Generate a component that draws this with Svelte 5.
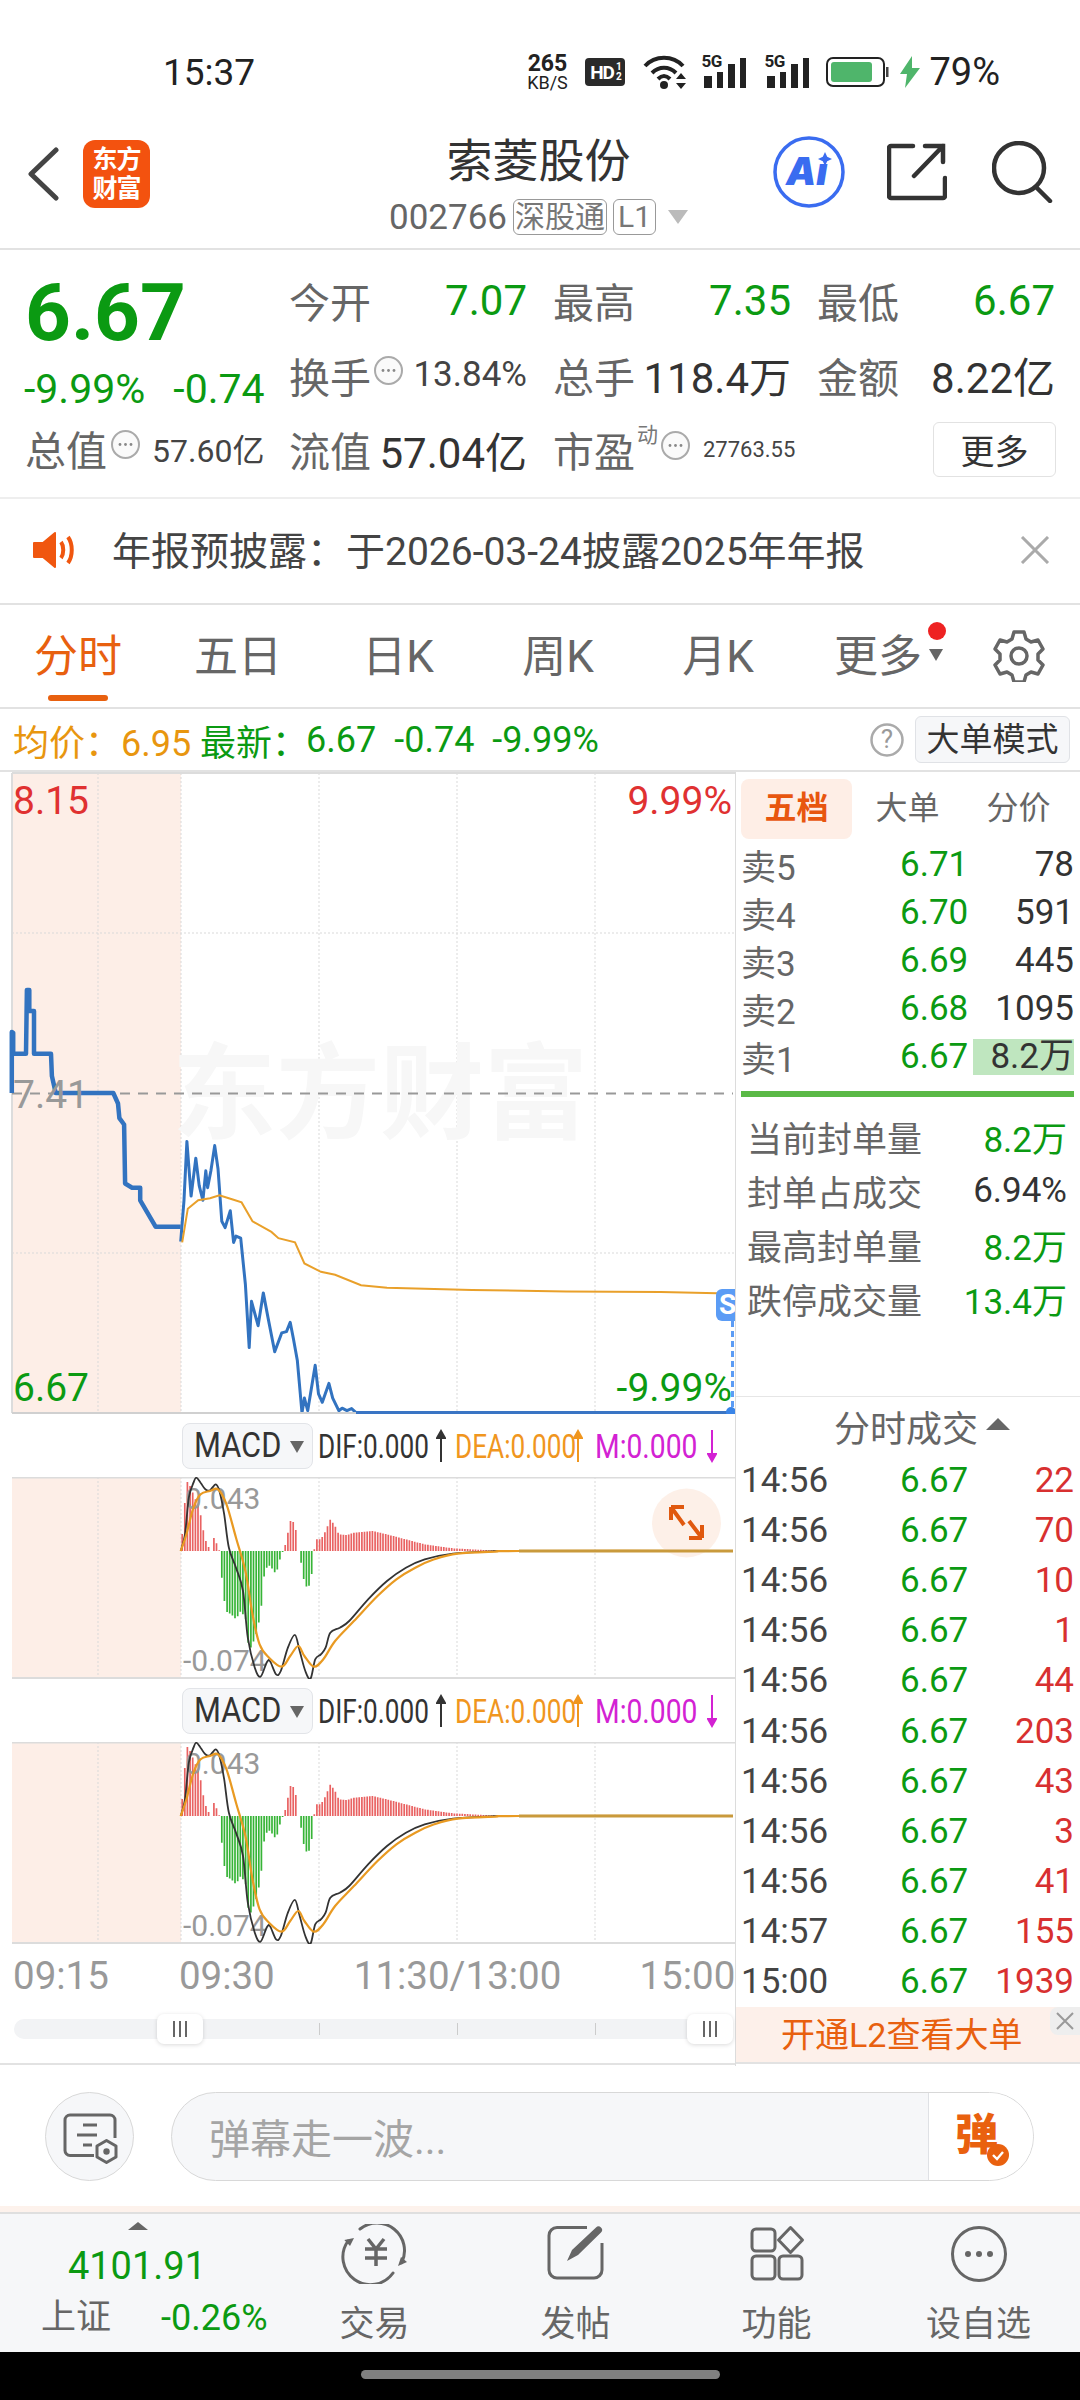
<script>
  // chart points are read off the zoomed reference, mapped to page pixels here
  const px = (X) => X / 2.119;
  const mainY = (Y) => 770 + Y / 2.376;
  const macdY = (Y) => 1410 + Y / 3;

  const line = (pts, fy) => pts.map(([x, y]) => `${px(x).toFixed(1)},${fy(y).toFixed(1)}`).join(' ');

  // catmull-rom so the MACD lines stay round
  function smooth(pts, fy) {
    const p = pts.map(([x, y]) => [px(x), fy(y)]);
    let d = `M${p[0][0].toFixed(1)} ${p[0][1].toFixed(1)}`;
    for (let i = 0; i < p.length - 1; i++) {
      const a = p[i - 1] || p[i], b = p[i], c = p[i + 1], e = p[i + 2] || c;
      const c1 = [b[0] + (c[0] - a[0]) / 6, b[1] + (c[1] - a[1]) / 6];
      const c2 = [c[0] - (e[0] - b[0]) / 6, c[1] - (e[1] - b[1]) / 6];
      d += `C${c1[0].toFixed(1)} ${c1[1].toFixed(1)} ${c2[0].toFixed(1)} ${c2[1].toFixed(1)} ${c[0].toFixed(1)} ${c[1].toFixed(1)}`;
    }
    return d;
  }

  const preMarket = [[25,765],[25,620],[28,622],[28,672],[55,672],[57,520],[62,520],[62,570],[72,570],[72,672],[108,672],[110,725],[118,765],[240,765],[250,790],[253,825],[263,840],[265,980],[280,990],[297,990],[297,1020],[330,1083],[383,1083]];
  const session = [[383,1118],[390,1020],[396,880],[405,1010],[415,920],[422,985],[430,1020],[436,950],[440,990],[447,950],[455,890],[462,945],[470,1070],[477,1085],[488,1045],[495,1120],[500,1105],[510,1110],[520,1220],[528,1370],[533,1260],[547,1318],[558,1240],[568,1300],[582,1380],[597,1335],[607,1332],[615,1310],[622,1350],[630,1400],[640,1525],[645,1490],[652,1520],[668,1412],[675,1480],[683,1500],[697,1455],[705,1490],[718,1520],[725,1514],[735,1520],[745,1515],[755,1525],[1550,1525]];
  const average = [[386,1120],[398,1040],[420,1020],[445,1015],[465,1008],[490,1017],[512,1025],[535,1070],[575,1095],[590,1110],[625,1120],[645,1170],[680,1190],[710,1197],[765,1222],[820,1228],[1000,1233],[1200,1237],[1400,1238],[1520,1241]];

  const dif = [[383,420],[392,370],[400,260],[410,215],[416,200],[425,215],[435,235],[445,238],[457,220],[465,240],[475,310],[485,410],[500,470],[515,540],[525,680],[540,770],[552,797],[565,755],[572,750],[585,790],[595,780],[610,710],[625,672],[635,720],[647,780],[658,803],[668,745],[680,730],[690,710],[700,665],[720,650],[740,630],[780,565],[820,510],[860,470],[900,445],[960,428],[1040,421],[1100,420],[1550,420]];
  const dea = [[383,420],[395,370],[410,290],[425,250],[445,240],[462,235],[480,280],[500,380],[520,480],[535,610],[550,700],[570,740],[597,767],[615,735],[632,705],[645,735],[665,767],[685,745],[710,690],[750,630],[800,555],[840,505],[880,470],[920,445],[970,428],[1050,422],[1100,420],[1550,420]];
  const envelope = [[383,420],[390,300],[396,210],[405,230],[412,260],[420,280],[428,330],[433,380],[440,400],[445,420],[450,420],[453,380],[460,400],[465,420],[470,500],[478,600],[490,610],[500,625],[510,600],[520,620],[528,720],[535,700],[545,660],[553,600],[560,490],[568,460],[575,470],[585,490],[596,430],[600,420],[605,400],[615,330],[625,335],[632,420],[636,420],[640,490],[650,530],[658,520],[665,430],[668,385],[680,385],[690,360],[700,325],[710,345],[718,370],[735,372],[750,365],[790,360],[820,370],[860,385],[900,400],[960,412],[1040,418],[1100,420]];

  function envAt(X) {
    for (let i = 0; i < envelope.length - 1; i++) {
      const [x0, y0] = envelope[i], [x1, y1] = envelope[i + 1];
      if (X >= x0 && X <= x1) return y0 + ((y1 - y0) * (X - x0)) / (x1 - x0);
    }
    return 420;
  }
  const bars = [];
  for (let X = 386; X < 1100; X += 5.6) bars.push({ x: px(X), y: envAt(X) });
  const red = bars.filter((b) => b.y < 419).map((b) => `M${b.x.toFixed(1)} ${macdY(420)}V${macdY(b.y).toFixed(1)}`).join('');
  const green = bars.filter((b) => b.y > 421).map((b) => `M${b.x.toFixed(1)} ${macdY(420)}V${macdY(b.y).toFixed(1)}`).join('');

  const gridX = [98, 181, 319, 457, 595];

  const asks = [
    { label: '卖5', price: '6.71', qty: '78' },
    { label: '卖4', price: '6.70', qty: '591' },
    { label: '卖3', price: '6.69', qty: '445' },
    { label: '卖2', price: '6.68', qty: '1095' },
    { label: '卖1', price: '6.67', qty: '8.2万', full: true }
  ];
  const stats = [
    { label: '当前封单量', value: '8.2万', green: true },
    { label: '封单占成交', value: '6.94%' },
    { label: '最高封单量', value: '8.2万', green: true },
    { label: '跌停成交量', value: '13.4万', green: true }
  ];
  const trades = [
    ['14:56', '22'], ['14:56', '70'], ['14:56', '10'], ['14:56', '1'], ['14:56', '44'], ['14:56', '203'],
    ['14:56', '43'], ['14:56', '3'], ['14:56', '41'], ['14:57', '155'], ['15:00', '1939']
  ];
  const tabs = ['分时', '五日', '日K', '周K', '月K', '更多'];
</script>

{#snippet dots()}
  <svg class="dots" width="31" height="31" viewBox="0 0 31 31">
    <circle cx="15.5" cy="15.5" r="13.5" fill="#fafafa" stroke="#aaa" stroke-width="2" />
    <circle cx="10" cy="15.5" r="1.4" fill="#888" /><circle cx="15.5" cy="15.5" r="1.4" fill="#888" /><circle cx="21" cy="15.5" r="1.4" fill="#888" />
  </svg>
{/snippet}

{#snippet signal()}
  <div class="signal">
    <span>5G</span>
    <svg width="46" height="32" viewBox="0 0 46 32">
      <rect x="3" y="20" width="8" height="12" fill="#222" /><rect x="16" y="16" width="6" height="16" fill="#222" />
      <rect x="27" y="8" width="7" height="24" fill="#222" /><rect x="39" y="2" width="6" height="30" fill="#222" />
    </svg>
  </div>
{/snippet}

{#snippet macdHead()}
  <div class="macd-head">
    <div class="macd-btn"><span>MACD</span><i></i></div>
    <span class="dif">DIF:0.000</span>
    <svg width="10" height="34" viewBox="0 0 10 34"><path d="M5 33V2M1 9l4-7 4 7z" stroke="#333" fill="#333" stroke-width="2" /></svg>
    <span class="dea">DEA:0.000</span>
    <svg width="10" height="34" viewBox="0 0 10 34"><path d="M5 33V2M1 9l4-7 4 7z" stroke="#f0961e" fill="#f0961e" stroke-width="2" /></svg>
    <span class="m">M:0.000</span>
    <svg width="10" height="34" viewBox="0 0 10 34"><path d="M5 1v31M1 25l4 7 4-7z" stroke="#d322d3" fill="#d322d3" stroke-width="2" /></svg>
  </div>
{/snippet}

{#snippet macdChart(expand)}
  <svg class="macd" width="735" height="202" viewBox="0 1476 735 202">
    <rect x="12" y="1476" width="169" height="202" fill="#fdeee7" />
    {#each gridX as x}
      <path d="M{x} 1476V1678" stroke="#d9d9d9" stroke-dasharray="2 2" />
    {/each}
    <path d="M12 1476.5H735M12 1677H735" stroke="#dcdcdc" stroke-width="2" />
    <path d={red} stroke="#e96262" stroke-width="1.7" fill="none" />
    <path d={green} stroke="#37b437" stroke-width="1.7" fill="none" />
    <text x="185" y="1508" class="axis-label">0.043</text>
    <text x="183" y="1670" class="axis-label">-0.074</text>
    <path d={smooth(dif, macdY)} stroke="#333" stroke-width="1.8" fill="none" />
    <path d={smooth(dea, macdY)} stroke="#e99a22" stroke-width="2.2" fill="none" />
    {#if expand}
      <circle cx="686.5" cy="1522" r="34.5" fill="#fdeee6" fill-opacity="0.9" />
      <path d="M671 1506h13M671 1506v13M671 1506l13 18M702 1537h-13M702 1537v-13M702 1537l-13-17" stroke="#e0590f" stroke-width="4" fill="none" />
    {/if}
    <path d="M519 1550H733" stroke="#c99a3c" stroke-width="2.8" />
  </svg>
{/snippet}

<div class="page">
  <div class="status">
    <span class="time">15:37</span>
    <div class="status-icons">
      <div class="speed"><b>265</b><span>KB/S</span></div>
      <div class="hd">HD<small>1<br />2</small></div>
      <svg class="wifi" width="46" height="36" viewBox="0 0 46 36">
        <path d="M2 12C12 1 30 1 40 12M9 19C16 12 26 12 33 19M15 25C19 21 23 21 27 25" stroke="#222" stroke-width="4" fill="none" />
        <circle cx="21" cy="31" r="4" fill="#222" />
        <path d="M33 25l5-6 5 6zM33 29l5 6 5-6z" fill="#222" />
      </svg>
      {@render signal()}
      {@render signal()}
      <svg class="battery" width="63" height="30" viewBox="0 0 63 30">
        <rect x="1" y="1" width="57" height="28" rx="6" fill="none" stroke="#222" stroke-width="2" />
        <rect x="5" y="5" width="41" height="20" rx="3" fill="#4fb56b" />
        <rect x="60" y="10" width="2.5" height="10" fill="#444" />
      </svg>
      <svg class="bolt" width="20" height="32" viewBox="0 0 20 32"><path d="M12 0L0 18h7L5 32 20 12h-8z" fill="#4fb56b" /></svg>
      <span class="battery-pct">79%</span>
    </div>
  </div>

  <header class="top">
    <div class="top-left">
      <svg width="32" height="54" viewBox="0 0 32 54"><path d="M29 3L4 27l25 24" stroke="#444" stroke-width="5" fill="none" stroke-linecap="round" stroke-linejoin="round" /></svg>
      <div class="logo">东方<br />财富</div>
    </div>
    <div class="top-center">
      <div class="name">索菱股份</div>
      <div class="code">
        <span>002766</span><em class="tag">深股通</em><em class="tag">L1</em><i class="tri"></i>
      </div>
    </div>
    <div class="top-right">
      <svg width="74" height="74" viewBox="0 0 74 74">
        <circle cx="37" cy="37" r="34" fill="none" stroke="#3a6cf0" stroke-width="3.5" />
        <text x="14" y="50" class="ai">Aı</text>
        <path d="M53 17l2.2 4.8L60 24l-4.8 2.2L53 31l-2.2-4.800L46 24l4.800-2.200z" fill="#3a6cf0" />
      </svg>
      <svg class="share" width="60" height="60" viewBox="0 0 60 60">
        <path d="M26 4H4a2 2 0 0 0-2 2v48a2 2 0 0 0 2 2h52a2 2 0 0 0 2-2V36M27 34L56 4M38 4h18v16" stroke="#333" stroke-width="4.5" fill="none" stroke-linecap="round" />
      </svg>
      <svg class="search" width="62" height="62" viewBox="0 0 62 62">
        <circle cx="27" cy="27" r="25" fill="none" stroke="#333" stroke-width="4.5" />
        <path d="M44 46l14 14" stroke="#333" stroke-width="4.5" stroke-linecap="round" />
      </svg>
    </div>
  </header>

  <section class="quote">
    <div class="quote-left">
      <div class="big">6.67</div>
      <div class="changes"><span>-9.99%</span><span>-0.74</span></div>
      <div class="cap"><label>总值</label>{@render dots()}<span class="small">57.60亿</span></div>
    </div>
    <div class="quote-grid">
      <div class="cell"><label>今开</label><span class="up">7.07</span></div>
      <div class="cell"><label>最高</label><span class="up">7.35</span></div>
      <div class="cell"><label>最低</label><span class="up">6.67</span></div>
      <div class="cell"><label>换手</label>{@render dots()}<span class="small push">13.84%</span></div>
      <div class="cell"><label>总手</label><span>118.4万</span></div>
      <div class="cell"><label>金额</label><span>8.22亿</span></div>
      <div class="cell"><label>流值</label><span>57.04亿</span></div>
      <div class="cell pe">
        <label>市盈</label><sup>动</sup>{@render dots()}<span class="tiny">27763.55</span>
      </div>
      <div class="cell end"><button>更多</button></div>
    </div>
  </section>

  <div class="notice">
    <svg width="46" height="38" viewBox="0 0 46 38">
      <path d="M1 12h9L22 2v34L10 26H1z" fill="#f0560f" stroke="#f0560f" stroke-linejoin="round" stroke-width="2" />
      <path d="M28 11c3 4 3 12 0 16M35 6c5 7 5 19 0 26" stroke="#f0560f" stroke-width="4" fill="none" />
    </svg>
    <span>年报预披露：于2026-03-24披露2025年年报</span>
    <svg class="close" width="30" height="28" viewBox="0 0 30 28"><path d="M2 1l26 26M28 1L2 27" stroke="#aaa" stroke-width="3" /></svg>
  </div>

  <nav class="tabs">
    {#each tabs as tab, i}
      <div class="tab" class:active={i === 0}>
        {tab}
        {#if tab === '更多'}<b class="dot"></b><i class="more-tri"></i>{/if}
      </div>
    {/each}
    <svg class="gear" width="52" height="52" viewBox="0 0 52 52">
      <path d="M21 2h10l2 7 5 3 7-2 5 9-5 5v6l5 5-5 9-7-2-5 3-2 7H21l-2-7-5-3-7 2-5-9 5-5v-6l-5-5 5-9 7 2 5-3z" fill="none" stroke="#666" stroke-width="3.500" stroke-linejoin="round" />
      <circle cx="26" cy="26" r="8" fill="none" stroke="#666" stroke-width="3.500" />
    </svg>
  </nav>

  <div class="infobar">
    <span class="avg">均价：6.95</span>
    <span class="latest">最新：</span>
    <span class="latest v1">6.67</span>
    <span class="latest v2">-0.74</span>
    <span class="latest v2">-9.99%</span>
    <svg class="help" width="34" height="34" viewBox="0 0 34 34">
      <circle cx="17" cy="17" r="15.5" fill="none" stroke="#aaa" stroke-width="2.5" />
      <text x="17" y="25" text-anchor="middle" class="help-mark">?</text>
    </svg>
    <div class="big-order">大单模式</div>
  </div>

  <main class="board">
    <div class="charts">
      <svg class="price" width="735" height="642" viewBox="0 771 735 642">
        <rect x="12" y="772" width="169" height="640" fill="#fdeee7" />
        {#each gridX as x}
          <path d="M{x} 772V1412" stroke="#d9d9d9" stroke-dasharray="2 2" />
        {/each}
        <path d="M12 932H735M12 1252H735" stroke="#d9d9d9" stroke-dasharray="2 2" />
        <path d="M12 772H735" stroke="#dcdcdc" stroke-width="2" />
        <path d="M12 772V1412" stroke="#dcdcdc" stroke-width="2" />
        <text x="172" y="1130" class="watermark">东方财富</text>
        <path d="M12 1092.5H733" stroke="#999" stroke-width="2" stroke-dasharray="10 8" />
        <polyline points={line(preMarket, mainY)} class="blue thick" />
        <polyline points={line(session, mainY)} class="blue" />
        <polyline points={line(average, mainY)} class="orange" />
        <path d="M12 1412H735" stroke="#d0d0d0" stroke-width="2" />
        <path d="M356 1412H732" stroke="#3a75c4" stroke-width="4" />
        <text x="13" y="813" class="lbl red">8.15</text>
        <text x="732" y="813" class="lbl red end">9.99%</text>
        <text x="13" y="1400" class="lbl green">6.67</text>
        <text x="732" y="1400" class="lbl green end">-9.99%</text>
        <text x="13" y="1107" class="lbl gray">7.41</text>
        <path d="M732.5 1320V1412" stroke="#5b9cf5" stroke-width="3" stroke-dasharray="6 4" />
        <rect x="716" y="1288" width="30" height="32" rx="6" fill="#5b9cf5" />
        <text x="719" y="1313" class="sell">S</text>
        <circle cx="731" cy="1411" r="5" fill="#3a85e8" />
      </svg>

      {@render macdHead()}
      {@render macdChart(true)}
      {@render macdHead()}
      {@render macdChart(false)}

      <div class="times"><span>09:15</span><span>09:30</span><span>11:30/13:00</span><span>15:00</span></div>
      <div class="slider">
        <div class="track">
          <i style="left: 305px"></i><i style="left: 443px"></i><i style="left: 581px"></i>
        </div>
        <div class="handle first"><b></b><b></b><b></b></div>
        <div class="handle last"><b></b><b></b><b></b></div>
      </div>
    </div>

    <aside class="side">
      <div class="side-tabs">
        <span class="on">五档</span><span>大单</span><span>分价</span>
      </div>
      <div class="asks">
        {#each asks as row}
          <div class="row">
            <span class="l">{row.label}</span>
            <span class="up">{row.price}</span>
            <span class="qty" class:full={row.full}>{row.qty}</span>
          </div>
        {/each}
      </div>
      <div class="split"></div>
      <div class="stats">
        {#each stats as s}
          <div class="stat"><span class="l">{s.label}</span><span class:up={s.green}>{s.value}</span></div>
        {/each}
      </div>
      <div class="trade-head">分时成交<i></i></div>
      <div class="trades">
        {#each trades as t}
          <div class="row trade"><span>{t[0]}</span><span class="up">6.67</span><span class="sell-qty">{t[1]}</span></div>
        {/each}
      </div>
      <div class="promo">
        开通L2查看大单
        <div class="promo-close"><svg width="20" height="20" viewBox="0 0 20 20"><path d="M2 2l16 16M18 2L2 18" stroke="#999" stroke-width="2" /></svg></div>
      </div>
    </aside>
  </main>

  <div class="comment">
    <div class="round">
      <svg width="56" height="53" viewBox="0 0 56 53">
        <path d="M32 44.500H8a5 5 0 0 1-5-5V9a5 5 0 0 1 5-5h40a5 5 0 0 1 5 5v18" fill="none" stroke="#666" stroke-width="3" />
        <path d="M21 14h14M15 24h20M21 34h9" stroke="#666" stroke-width="3" />
        <path d="M44.500 29.500L54 35v11l-9.500 5.500L35 46V35z" fill="#f6f7f9" stroke="#666" stroke-width="3" stroke-linejoin="round" />
        <circle cx="44.500" cy="40.500" r="3.200" fill="#666" />
      </svg>
    </div>
    <div class="input">
      <span class="ph">弹幕走一波...</span>
      <div class="send">
        <b>弹</b>
        <svg class="check" width="22" height="22" viewBox="0 0 22 22">
          <circle cx="11" cy="11" r="11" fill="#e9610f" />
          <path d="M6 11l4 4 6-7" stroke="#fff" stroke-width="2.400" fill="none" />
        </svg>
      </div>
    </div>
  </div>

  <footer class="bottom">
    <div class="index">
      <i class="idx-tri"></i>
      <div class="idx-val">4101.91</div>
      <div class="idx-row"><span>上证</span><span class="up">-0.26%</span></div>
    </div>
    <div class="item">
      <svg width="68" height="60" viewBox="0 0 68 60">
        <path d="M19 5A27.500 27.500 0 0 1 60.700 38.700M52 49A27.500 27.500 0 0 1 7 17" fill="none" stroke="#666" stroke-width="3" stroke-linecap="round" />
        <path d="M57 42l9-4-6-5zM3.300 16L13 14l-4 8z" fill="#666" />
        <path d="M27 15l8 10 8-10M24 25h22M24 34h22M35 25v17" fill="none" stroke="#666" stroke-width="3.500" />
      </svg>
      <span>交易</span>
    </div>
    <div class="item">
      <svg width="60" height="58" viewBox="0 0 60 58">
        <path d="M41 2.500H11a8 8 0 0 0-8 8V45a8 8 0 0 0 8 8h37a8 8 0 0 0 8-8V18" fill="none" stroke="#666" stroke-width="3" />
        <path d="M21 36l5-11L50 2.500a3.500 3.500 0 0 1 5 5L32 30z" fill="#666" />
      </svg>
      <span>发帖</span>
    </div>
    <div class="item">
      <svg width="56" height="56" viewBox="0 0 56 56">
        <g fill="none" stroke="#666" stroke-width="3">
          <rect x="3" y="3" width="23" height="22" rx="4" />
          <path d="M41.500 1.500l12 12.500-12 12.500-12-12.500z" stroke-linejoin="round" />
          <rect x="3" y="30" width="23" height="23" rx="4" />
          <rect x="30" y="30" width="23" height="23" rx="4" />
        </g>
      </svg>
      <span>功能</span>
    </div>
    <div class="item">
      <svg width="58" height="58" viewBox="0 0 58 58">
        <circle cx="29" cy="29" r="26.500" fill="none" stroke="#666" stroke-width="3" />
        <circle cx="18" cy="29" r="3" fill="#666" /><circle cx="29" cy="29" r="3" fill="#666" /><circle cx="40" cy="29" r="3" fill="#666" />
      </svg>
      <span>设自选</span>
    </div>
  </footer>

  <div class="gesture"><i></i></div>
</div>

<style>
  :global(body) {
    margin: 0;
    background: #fff;
  }

  .page {
    width: 1080px;
    height: 2400px;
    overflow: hidden;
    display: flex;
    flex-direction: column;
    background: #fff;
    color: #333;
    font-family: Roboto, "Noto Sans CJK SC", sans-serif;
  }

  /* status bar */
  .status {
    height: 110px;
    flex: none;
    display: flex;
    align-items: center;
    padding: 44px 80px 0 163px;
    box-sizing: border-box;
    justify-content: space-between;
    color: #222;
  }
  .time {
    font-size: 37px;
    margin-bottom: 9px;
  }
  .status-icons {
    display: flex;
    align-items: center;
    height: 40px;
    margin-bottom: 10px;
  }
  .speed {
    display: flex;
    flex-direction: column;
    align-items: center;
    width: 44px;
    line-height: 1;
  }
  .speed b {
    font-size: 23px;
    line-height: 20px;
    font-weight: 700;
  }
  .speed span {
    font-size: 18px;
    line-height: 17px;
  }
  .hd {
    margin-left: 16px;
    width: 40px;
    height: 28px;
    background: #2a2a2a;
    border-radius: 4px;
    color: #fff;
    font-size: 19px;
    font-weight: 700;
    display: flex;
    align-items: center;
    justify-content: center;
    letter-spacing: -1px;
  }
  .hd small {
    font-size: 10px;
    line-height: 10px;
    margin-left: 2px;
  }
  .wifi {
    margin-left: 18px;
  }
  .signal {
    position: relative;
    width: 46px;
    height: 32px;
    margin-left: 12px;
    margin-top: -1px;
  }
  .signal + .signal {
    margin-left: 17px;
  }
  .signal span {
    position: absolute;
    left: 0;
    top: -3px;
    font-size: 17px;
    font-weight: 700;
    letter-spacing: -0.5px;
    color: #222;
    line-height: 16px;
  }
  .battery {
    margin-left: 16px;
  }
  .bolt {
    margin-left: 11px;
  }
  .battery-pct {
    font-size: 38px;
    margin-left: 9px;
  }

  /* stock header */
  .top {
    height: 140px;
    flex: none;
    display: grid;
    grid-template-columns: 385px 310px 385px;
    box-sizing: border-box;
    border-bottom: 2px solid #e2e2e2;
  }
  .top-left {
    display: flex;
    align-items: center;
    padding-left: 27px;
    gap: 24px;
    margin-bottom: 10px;
  }
  .logo {
    width: 67px;
    height: 68px;
    border-radius: 12px;
    background: #f3520f;
    color: #fff;
    font-size: 25px;
    font-weight: 700;
    line-height: 29px;
    letter-spacing: -1px;
    text-align: center;
    display: flex;
    align-items: center;
    justify-content: center;
  }
  .top-center {
    display: flex;
    flex-direction: column;
    align-items: center;
  }
  .name {
    font-size: 46px;
    line-height: 58px;
    margin-top: 22px;
    margin-left: -3px;
    color: #333;
  }
  .code {
    display: flex;
    align-items: center;
    margin-top: 9px;
    margin-left: -3px;
    height: 36px;
    font-size: 35px;
    color: #666;
  }
  .tag {
    font-style: normal;
    font-size: 30px;
    line-height: 34px;
    border: 1px solid #999;
    border-radius: 6px;
    padding: 0 1px;
    margin-left: 6px;
    color: #777;
  }
  .tag + .tag {
    padding: 0 4px;
  }
  .tri {
    width: 0;
    height: 0;
    margin-left: 12px;
    border-left: 10px solid transparent;
    border-right: 10px solid transparent;
    border-top: 14px solid #bbb;
  }
  .top-right {
    display: flex;
    align-items: center;
    margin-bottom: 14px;
    padding-left: 77px;
  }
  .share {
    margin-left: 41px;
  }
  .search {
    margin-left: 45px;
    margin-right: -3px;
  }
  .ai {
    font: italic 900 38px Inter, sans-serif;
    fill: #3a6cf0;
  }

  /* quote */
  .quote {
    height: 249px;
    flex: none;
    display: flex;
    box-sizing: border-box;
    border-bottom: 2px solid #eee;
    font-size: 42px;
    white-space: nowrap;
  }
  label {
    color: #666;
    font-size: 41px;
    flex: none;
  }
  .up {
    color: #0b9a12;
  }
  .quote-left {
    width: 289px;
    flex: none;
    padding-left: 24px;
    box-sizing: border-box;
  }
  .big {
    font-size: 80px;
    font-weight: 700;
    color: #0b9a12;
    line-height: 84px;
    margin-top: 21px;
    margin-left: 1px;
  }
  .changes {
    display: flex;
    gap: 28px;
    color: #0b9a12;
    font-size: 41px;
    line-height: 44px;
    margin-top: 12px;
  }
  .cap {
    display: flex;
    align-items: center;
    height: 40px;
    margin-top: 17px;
    margin-left: 1px;
  }
  .small {
    font-size: 32px;
    color: #444;
  }
  .cap .small {
    margin-left: 11px;
  }
  .cell .small {
    font-size: 35px;
  }
  .push {
    margin-left: auto;
  }
  .dots {
    margin-left: 3px;
    margin-bottom: 8px;
    flex: none;
  }
  .quote-grid {
    flex: 1;
    display: grid;
    grid-template-columns: 238px 238px 238px;
    column-gap: 26px;
    grid-auto-rows: 74.5px;
    padding-top: 13px;
  }
  .cell {
    display: flex;
    align-items: center;
    justify-content: space-between;
    color: #333;
  }
  .cell .dots {
    margin-left: 2px;
  }
  .pe {
    justify-content: flex-start;
    position: relative;
  }
  .pe sup {
    font-size: 21px;
    color: #777;
    margin: -28px 0 0 2px;
    line-height: 1;
  }
  .pe .tiny {
    font-size: 22px;
    color: #444;
    margin-left: 12px;
  }
  .end {
    justify-content: flex-end;
  }
  .end button {
    width: 123px;
    height: 55px;
    margin-right: -1px;
    background: #fff;
    border: 1px solid #e2e2e2;
    border-radius: 6px;
    font: 34px Roboto, "Noto Sans CJK SC", sans-serif;
    color: #333;
    padding: 0;
  }

  /* notice */
  .notice {
    height: 106px;
    flex: none;
    display: flex;
    align-items: center;
    padding: 0 30px 2px 33px;
    box-sizing: border-box;
    border-bottom: 2px solid #e2e2e2;
    font-size: 39px;
    color: #444;
  }
  .notice span {
    margin-left: 33px;
    margin-top: -4px;
    white-space: nowrap;
  }
  .close {
    margin-left: auto;
  }

  /* period tabs */
  .tabs {
    height: 104px;
    flex: none;
    display: grid;
    grid-template-columns: repeat(6, 160px) 1fr;
    margin-left: -2px;
    box-sizing: border-box;
    border-bottom: 2px solid #e2e2e2;
    align-items: center;
    font-size: 44px;
    color: #666;
  }
  .tab {
    position: relative;
    text-align: center;
    line-height: 104px;
    height: 102px;
    margin-top: -1px;
  }
  .tab.active {
    color: #e8600f;
  }
  .tab.active::after {
    content: "";
    position: absolute;
    left: 50px;
    width: 60px;
    top: 90px;
    height: 6px;
    border-radius: 3px;
    background: #e8600f;
  }
  .dot {
    position: absolute;
    left: 130px;
    top: 17px;
    width: 18px;
    height: 18px;
    border-radius: 50%;
    background: #ee2222;
  }
  .more-tri {
    position: absolute;
    left: 131px;
    top: 44px;
    border-left: 7px solid transparent;
    border-right: 7px solid transparent;
    border-top: 12px solid #666;
  }
  .gear {
    margin-left: 35px;
  }

  /* info bar */
  .infobar {
    height: 63px;
    flex: none;
    display: flex;
    align-items: center;
    padding: 0 10px 0 13px;
    box-sizing: border-box;
    border-bottom: 2px solid #e2e2e2;
    font-size: 36px;
  }
  .avg {
    color: #e8960f;
    width: 187px;
    white-space: nowrap;
  }
  .latest {
    color: #0b9a12;
  }
  .v1 {
    margin-left: -2px;
  }
  .v2 {
    margin-left: 18px;
  }
  .help {
    margin-left: auto;
  }
  .help-mark {
    font-size: 26px;
    fill: #999;
  }
  .big-order {
    margin-left: 11px;
    width: 155px;
    height: 47px;
    background: #f6f7f9;
    border: 1px solid #e0e2e6;
    border-radius: 6px;
    box-sizing: border-box;
    font-size: 33px;
    line-height: 45px;
    text-align: center;
    color: #333;
  }

  /* chart column */
  .board {
    height: 1294px;
    flex: none;
    display: flex;
  }
  .charts {
    width: 735px;
    flex: none;
  }
  .charts svg.price,
  .charts svg.macd {
    display: block;
  }
  .blue {
    fill: none;
    stroke: #3273c0;
    stroke-width: 3;
    stroke-linejoin: round;
  }
  .thick {
    stroke-width: 4.5;
  }
  .orange {
    fill: none;
    stroke: #e9a02a;
    stroke-width: 2;
  }
  .lbl {
    font-size: 39px;
  }
  .lbl.end {
    text-anchor: end;
  }
  .red {
    fill: #e03131;
  }
  .green {
    fill: #0b9a12;
  }
  .gray {
    fill: #999;
  }
  .watermark {
    font-size: 104px;
    font-weight: 700;
    fill: #f7f7f7;
  }
  .sell {
    font-size: 28px;
    font-weight: 700;
    fill: #fff;
  }
  .axis-label {
    font-size: 30px;
    fill: #999;
  }
  .macd-head {
    height: 63px;
    display: flex;
    align-items: center;
    padding-left: 182px;
    font-size: 34px;
    box-sizing: border-box;
  }
  .macd-btn {
    width: 131px;
    height: 46px;
    box-sizing: border-box;
    background: #f6f7f9;
    border: 1px solid #e2e4e8;
    border-radius: 8px;
    font-size: 35px;
    line-height: 44px;
    padding-left: 11px;
    position: relative;
    color: #333;
    margin-right: 5px;
  }
  .macd-btn span {
    transform: scaleX(0.88);
    transform-origin: left center;
  }
  .macd-btn i {
    position: absolute;
    left: 107px;
    top: 17px;
    border-left: 7px solid transparent;
    border-right: 7px solid transparent;
    border-top: 12px solid #666;
  }
  .macd-head span {
    display: inline-block;
    white-space: nowrap;
  }
  .dif,
  .dea {
    transform: scaleX(0.77);
    transform-origin: left center;
  }
  .m {
    transform: scaleX(0.83);
    transform-origin: left center;
  }
  .dif {
    color: #333;
    width: 118px;
  }
  .dea {
    color: #f0961e;
    margin-left: 9px;
    width: 118px;
  }
  .m {
    color: #d322d3;
    margin-left: 12px;
    width: 112px;
  }
  .times {
    height: 56px;
    display: flex;
    padding-left: 13px;
    font-size: 38.5px;
    line-height: 64px;
    color: #999;
    white-space: nowrap;
  }
  .times span {
    margin-left: 70px;
  }
  .times span:first-child {
    margin-left: 0;
  }
  .times span:nth-child(3) {
    margin-left: 79px;
  }
  .times span:nth-child(4) {
    margin-left: 78px;
  }
  .slider {
    position: relative;
    height: 65px;
    box-sizing: border-box;
    border-bottom: 2px solid #e2e2e2;
  }
  .track {
    position: absolute;
    left: 14px;
    width: 719px;
    top: 19px;
    height: 20px;
    border-radius: 10px;
    background: #f2f3f5;
  }
  .track i {
    position: absolute;
    top: 4px;
    width: 1px;
    height: 12px;
    background: #ccc;
  }
  .handle {
    position: absolute;
    top: 14px;
    width: 46px;
    height: 30px;
    border-radius: 7px;
    background: #fff;
    box-shadow: 0 1px 4px rgba(0, 0, 0, 0.15);
    display: flex;
    align-items: center;
    justify-content: center;
    gap: 4px;
  }
  .handle b {
    width: 2px;
    height: 16px;
    background: #666;
  }
  .first {
    left: 157px;
  }
  .last {
    left: 687px;
  }

  /* right column */
  .side {
    flex: 1;
    border-left: 1px solid #dcdcdc;
    display: flex;
    flex-direction: column;
    font-size: 35px;
    min-width: 0;
  }
  .side-tabs {
    height: 67px;
    flex: none;
    display: flex;
    padding: 7px 0 0 5px;
    box-sizing: border-box;
    color: #666;
    font-size: 32px;
  }
  .side-tabs span {
    width: 111px;
    height: 60px;
    line-height: 58px;
    text-align: center;
  }
  .side-tabs .on {
    background: #feeee6;
    color: #e8560f;
    font-weight: 700;
    border-radius: 8px;
  }
  .row {
    display: grid;
    grid-template-columns: 159px 74px 1fr;
    align-items: center;
    height: 48px;
    padding: 0 6px 0 5px;
  }
  .row .l,
  .stat .l {
    color: #666;
  }
  .qty {
    justify-self: end;
    color: #333;
  }
  .qty.full {
    justify-self: stretch;
    text-align: right;
    background: #bfe6bf;
    height: 36px;
    line-height: 36px;
    margin-left: -1px;
  }
  .split {
    height: 6px;
    flex: none;
    background: #5ab946;
    margin: 12px 6px 0 5px;
  }
  .stats {
    margin-top: 12px;
    height: 288px;
    flex: none;
    box-sizing: border-box;
    border-bottom: 1px solid #e6e6e6;
    padding: 0 13px 0 11px;
  }
  .stat {
    height: 54px;
    display: flex;
    justify-content: space-between;
    align-items: center;
    font-size: 35px;
    color: #333;
  }
  .trade-head {
    height: 58px;
    flex: none;
    display: flex;
    align-items: center;
    justify-content: center;
    color: #666;
    font-size: 36px;
    padding-left: 28px;
  }
  .trade-head i {
    margin-left: 8px;
    border-left: 12px solid transparent;
    border-right: 12px solid transparent;
    border-bottom: 12px solid #666;
    margin-top: -4px;
  }
  .trade {
    height: 50.2px;
    color: #444;
  }
  .sell-qty {
    justify-self: end;
    color: #d83030;
  }
  .promo {
    position: relative;
    flex: none;
    height: 57px;
    background: #fdf0ea;
    color: #e8600f;
    font-size: 34px;
    line-height: 57px;
    padding-left: 45px;
    box-sizing: border-box;
    border-bottom: 2px solid #e2e2e2;
  }
  .promo-close {
    position: absolute;
    right: 0;
    top: 0;
    width: 30px;
    height: 28px;
    background: #eee;
    border-radius: 8px 0 0 8px;
    display: flex;
    align-items: center;
    justify-content: center;
  }

  /* danmaku input */
  .comment {
    height: 146px;
    flex: none;
    display: flex;
    align-items: center;
    padding: 0 46px 0 45px;
    box-sizing: border-box;
    border-bottom: 6px solid #fdf2ec;
  }
  .round {
    width: 89px;
    height: 89px;
    flex: none;
    box-sizing: border-box;
    border-radius: 50%;
    background: #f6f7f9;
    border: 1px solid #d8d8d8;
    display: flex;
    align-items: center;
    justify-content: center;
    padding-top: 3px;
  }
  .input {
    flex: 1;
    margin-left: 37px;
    height: 89px;
    box-sizing: border-box;
    border-radius: 45px;
    background: #f6f7f9;
    border: 1px solid #d8d8d8;
    display: flex;
    align-items: center;
    justify-content: space-between;
  }
  .ph {
    margin-left: 37px;
    font-size: 41px;
    color: #a5a5a5;
  }
  .send {
    position: relative;
    width: 105px;
    height: 100%;
    border-left: 1px solid #dfe1e5;
    box-sizing: border-box;
    background: #fff;
    border-radius: 0 44px 44px 0;
    color: #e9610f;
    font-size: 43px;
    line-height: 84px;
    padding-left: 26px;
  }
  .send b {
    font-weight: 900;
  }
  .check {
    position: absolute;
    left: 58px;
    top: 51px;
  }

  /* bottom bar */
  .bottom {
    height: 140px;
    flex: none;
    display: grid;
    grid-template-columns: 274px 201px 201px 201px 203px;
    background: #f6f7f9;
    border-top: 2px solid #dfdfdf;
    box-sizing: border-box;
  }
  .index {
    position: relative;
    text-align: center;
  }
  .idx-tri {
    position: absolute;
    left: 128px;
    top: 8px;
    border-left: 10px solid transparent;
    border-right: 10px solid transparent;
    border-bottom: 8px solid #666;
  }
  .idx-val {
    color: #0b9a12;
    font-size: 38px;
    line-height: 44px;
    margin-top: 30px;
  }
  .idx-row {
    display: flex;
    gap: 50px;
    padding-left: 41px;
    font-size: 35px;
    line-height: 44px;
    color: #666;
    margin-top: 8px;
  }
  .idx-row .up {
    font-size: 36px;
  }
  .item {
    display: flex;
    flex-direction: column;
    align-items: center;
    color: #666;
    font-size: 35px;
  }
  .item svg {
    height: 60px;
    margin-top: 10px;
  }
  .item span {
    line-height: 40px;
    margin-top: 21px;
  }
  .gesture {
    height: 48px;
    flex: none;
    background: #000;
    position: relative;
  }
  .gesture i {
    position: absolute;
    left: 361px;
    top: 18px;
    width: 359px;
    height: 9px;
    border-radius: 5px;
    background: #808080;
  }
</style>
